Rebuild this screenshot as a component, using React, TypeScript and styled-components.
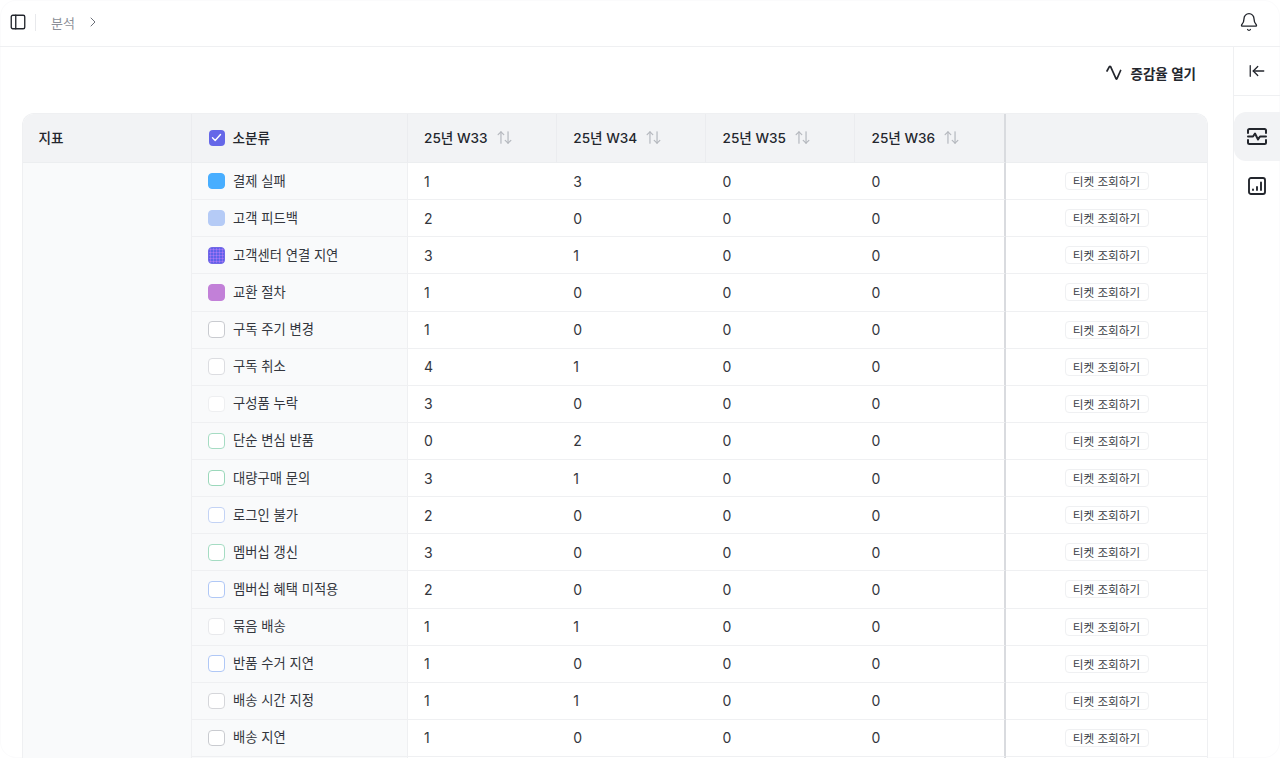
import React from "react";
import styled, { createGlobalStyle } from "styled-components";
import { Bell, ChevronRight, PanelLeft, ArrowLeftToLine, ArrowUpDown } from "lucide-react";

const Global = createGlobalStyle`
  html, body { margin: 0; padding: 0; height: 100%; background: #fff; overflow: hidden; }
  body { font-family: Inter, "Noto Sans CJK KR", "Noto Sans", sans-serif; color: #23262d; }
  * { box-sizing: border-box; }
`;

const Shell = styled.div`
  width: 1280px; height: 758px; display: flex; flex-direction: column; overflow: hidden;
  border-radius: 16px; box-shadow: inset 0 0 0 1px #fbfbfc; background: #fff;
`;
const TopBar = styled.header`
  flex: 0 0 47px; display: flex; align-items: center; border-bottom: 1px solid #eff0f2; padding: 0 21px 2px 9px;
`;
const IconBtn = styled.button`
  display: flex; align-items: center; justify-content: center; padding: 0; border: 0; background: none; color: #23262d;
`;
const Divider = styled.span`
  width: 1px; height: 17px; background: #e8e9ec; margin: 0 15px 0 8px;
`;
const Crumb = styled.span`
  font-size: 13px; color: #8b8f98;
`;
const CrumbArrow = styled(ChevronRight)`
  margin-left: 10px; color: #6c7079;
`;
const Spacer = styled.div`flex: 1;`;
const Body = styled.div`
  flex: 1; min-height: 0; display: flex;
`;
const Main = styled.main`
  width: 1233px; display: flex; flex-direction: column; min-height: 0;
`;
const Toolbar = styled.div`
  flex: 0 0 66px; display: flex; justify-content: flex-end; align-items: flex-start; padding: 16px 37px 0 0;
`;
const GrowthBtn = styled.button`
  display: flex; align-items: center; gap: 8px; height: 20px; padding: 0; border: 0; background: none;
  font: 600 13.5px Inter, "Noto Sans CJK KR", sans-serif; color: #23262d;
`;
const TableWrap = styled.div`
  margin-left: 22px; width: 1186px; border: 1px solid #eff0f2; border-bottom: 0; border-radius: 12px 12px 0 0; overflow: hidden;
`;
const Table = styled.table`
  width: 1186px; margin: -1px; border-collapse: separate; border-spacing: 0; table-layout: fixed; font-size: 14px;
`;
const HeadCell = styled.th`
  height: 50px; padding: 0 0 0 16.5px; background: #f2f3f5; text-align: left; font-weight: 500; font-size: 13.6px; color: #23262d;
  border-bottom: 1px solid #eceef0; border-right: 1px solid ${p => p.$strong ? "#d9dbdf" : "#ebecef"};
  ${p => p.$strong ? "border-right-width: 2px;" : ""}
  &:last-child { border-right: 0; }
`;
const HeadInner = styled.span`
  display: flex; align-items: center; gap: 8px;
`;
const Label = styled.span`
  margin-bottom: 2px;
`;
const SortIcon = styled(ArrowUpDown)`
  color: #b5b8be; margin-bottom: 1px;
`;
const MetricCell = styled.td`
  background: #f9fafb; border-right: 1px solid #eff0f2; padding: 0;
`;
const CategoryCell = styled.td`
  height: 37.125px; padding: 0 0 0 16px; background: #f9fafb; border-right: 1px solid #eff0f2; border-bottom: 1px solid #eff0f2; color: #33363d;
`;
const CategoryInner = styled.span`
  display: flex; align-items: center; gap: 8.5px; font-size: 13.3px;
`;
const Swatch = styled.span`
  flex: 0 0 16.5px; width: 16.5px; height: 16.5px; border-radius: 4px; border: 1px solid ${p => p.$line};
  background: ${p => p.$dotted
    ? `radial-gradient(circle, #a877f5 45%, transparent 50%) 0 0 / 3px 3px, ${p.$fill}`
    : p.$fill};
`;
const CheckBox = styled.span`
  flex: 0 0 16px; width: 16px; height: 16px; border-radius: 4px; background: #6567e8; display: flex; align-items: center; justify-content: center;
`;
const ValueCell = styled.td`
  height: 37.125px; padding: 0 0 0 16.5px; background: #fff; border-bottom: 1px solid #eff0f2; color: #33363d; font-size: 14px;
  ${p => p.$strong ? "border-right: 2px solid #d9dbdf;" : ""}
`;
const ActionCell = styled.td`
  text-align: center; padding: 0; background: #fff; border-bottom: 1px solid #eff0f2; border-right: 1px solid #eff0f2;
`;
const TicketBtn = styled.button`
  display: inline-flex; align-items: center; justify-content: center; width: 84px; height: 18px; padding: 0; background: #fff;
  border: 1px solid #eff0f2; border-radius: 4px; font: 400 11.6px Inter, "Noto Sans CJK KR", sans-serif; color: #3a3d44;
`;
const Rail = styled.aside`
  flex: 0 0 47px; border-left: 1px solid #eff0f2; display: flex; flex-direction: column; align-items: stretch;
`;
const RailTop = styled.div`
  height: 49px; display: flex; align-items: center; justify-content: center; border-bottom: 1px solid #eff0f2;
`;
const RailNav = styled.nav`
  display: flex; flex-direction: column; padding: 16px 0 0 0;
`;
const RailItem = styled.div`
  height: 49px; display: flex; align-items: center; justify-content: center; border-radius: 12px 0 0 12px;
  background: ${p => p.$active ? "#f2f3f5" : "transparent"};
`;

const rows: [string, string, string, number, number, boolean?][] = [
  ["결제 실패", "#48aeff", "#48aeff", 1, 3],
  ["고객 피드백", "#b5cbf6", "#b5cbf6", 2, 0],
  ["고객센터 연결 지연", "#5f62ea", "#7468e6", 3, 1, true],
  ["교환 절차", "#c280d8", "#c280d8", 1, 0],
  ["구독 주기 변경", "#fff", "#c9cbd0", 1, 0],
  ["구독 취소", "#fff", "#dcdde1", 4, 1],
  ["구성품 누락", "#fff", "#eeeff1", 3, 0],
  ["단순 변심 반품", "#fff", "#a5dcc3", 0, 2],
  ["대량구매 문의", "#fff", "#9bd8bb", 3, 1],
  ["로그인 불가", "#fff", "#c3d3f5", 2, 0],
  ["멤버십 갱신", "#fff", "#a5dcc3", 3, 0],
  ["멤버십 혜택 미적용", "#fff", "#b0c8f6", 2, 0],
  ["묶음 배송", "#fff", "#e8e9ec", 1, 1],
  ["반품 수거 지연", "#fff", "#b0c8f6", 1, 0],
  ["배송 시간 지정", "#fff", "#d5d6da", 1, 1],
  ["배송 지연", "#fff", "#c9cbd0", 1, 0],
];
const weeks = ["25년 W33", "25년 W34", "25년 W35", "25년 W36"];

const WaveIcon = () => (
  <svg width="16" height="16" viewBox="0 0 16 16" fill="none" stroke="#23262d" strokeWidth="1.7" strokeLinecap="round" strokeLinejoin="round">
    <path d="M1 6 3.4 1.6Q4 1 4.6 1.6L10 13.6Q10.5 14.5 11 13.6L14.6 5.5" />
  </svg>
);
const PulseCardIcon = () => (
  <svg width="20" height="17" viewBox="0 0 20 17" fill="none" stroke="#23262d" strokeWidth="2" strokeLinecap="round" strokeLinejoin="round">
    <path d="M1 5V2.5A1.5 1.5 0 0 1 2.5 1h15A1.5 1.5 0 0 1 19 2.5V5" />
    <path d="M1 12v2.5A1.5 1.5 0 0 0 2.5 16h15a1.5 1.5 0 0 0 1.5-1.5V12" />
    <path d="M1 8.5h5l2-3 3 6 2-3h6" />
  </svg>
);
const ChartIcon = () => (
  <svg width="18" height="18" viewBox="0 0 18 18" fill="none" stroke="#23262d" strokeWidth="1.9" strokeLinecap="round" strokeLinejoin="round">
    <rect x="1" y="1" width="16" height="16" rx="2" />
    <path d="M5 13v-.5M9 13v-3M13 13V5.5" />
  </svg>
);
const SmallCheck = () => (
  <svg width="13" height="13" viewBox="0 0 13 13" fill="none" stroke="#fff" strokeWidth="1.4" strokeLinecap="round" strokeLinejoin="round">
    <path d="M2.5 6.8 5.2 9.5 10.5 3.5" />
  </svg>
);

export default function App() {
  return (
    <Shell>
      <Global />
      <TopBar>
        <IconBtn aria-label="사이드바"><PanelLeft size={18} strokeWidth={1.8} /></IconBtn>
        <Divider />
        <Crumb>분석</Crumb>
        <CrumbArrow size={16} strokeWidth={1.5} />
        <Spacer />
        <IconBtn aria-label="알림"><Bell size={20} strokeWidth={1.6} /></IconBtn>
      </TopBar>
      <Body>
        <Main>
          <Toolbar>
            <GrowthBtn><WaveIcon />증감율 열기</GrowthBtn>
          </Toolbar>
          <TableWrap>
            <Table>
              <colgroup>
                <col style={{ width: 170 }} />
                <col style={{ width: 215.5 }} />
                <col style={{ width: 149.25 }} />
                <col style={{ width: 149.25 }} />
                <col style={{ width: 149 }} />
                <col style={{ width: 151 }} />
                <col />
              </colgroup>
              <thead>
                <tr>
                  <HeadCell><HeadInner><Label>지표</Label></HeadInner></HeadCell>
                  <HeadCell>
                    <HeadInner><CheckBox><SmallCheck /></CheckBox><Label>소분류</Label></HeadInner>
                  </HeadCell>
                  {weeks.map((w, i) => (
                    <HeadCell key={w} $strong={i === 3}>
                      <HeadInner><Label>{w}</Label><SortIcon size={17} strokeWidth={1.7} /></HeadInner>
                    </HeadCell>
                  ))}
                  <HeadCell />
                </tr>
              </thead>
              <tbody>
                {rows.map(([name, fill, line, a, b, dotted], i) => (
                  <tr key={name}>
                    {i === 0 && <MetricCell rowSpan={rows.length + 1} />}
                    <CategoryCell>
                      <CategoryInner><Swatch $fill={fill} $line={line} $dotted={dotted} /><Label>{name}</Label></CategoryInner>
                    </CategoryCell>
                    <ValueCell>{a}</ValueCell>
                    <ValueCell>{b}</ValueCell>
                    <ValueCell>0</ValueCell>
                    <ValueCell $strong>0</ValueCell>
                    <ActionCell><TicketBtn>티켓 조회하기</TicketBtn></ActionCell>
                  </tr>
                ))}
                <tr>
                  <CategoryCell />
                  <ValueCell />
                  <ValueCell />
                  <ValueCell />
                  <ValueCell $strong />
                  <ActionCell />
                </tr>
              </tbody>
            </Table>
          </TableWrap>
        </Main>
        <Rail>
          <RailTop><ArrowLeftToLine size={18} strokeWidth={1.7} /></RailTop>
          <RailNav>
            <RailItem $active><PulseCardIcon /></RailItem>
            <RailItem><ChartIcon /></RailItem>
          </RailNav>
        </Rail>
      </Body>
    </Shell>
  );
}
